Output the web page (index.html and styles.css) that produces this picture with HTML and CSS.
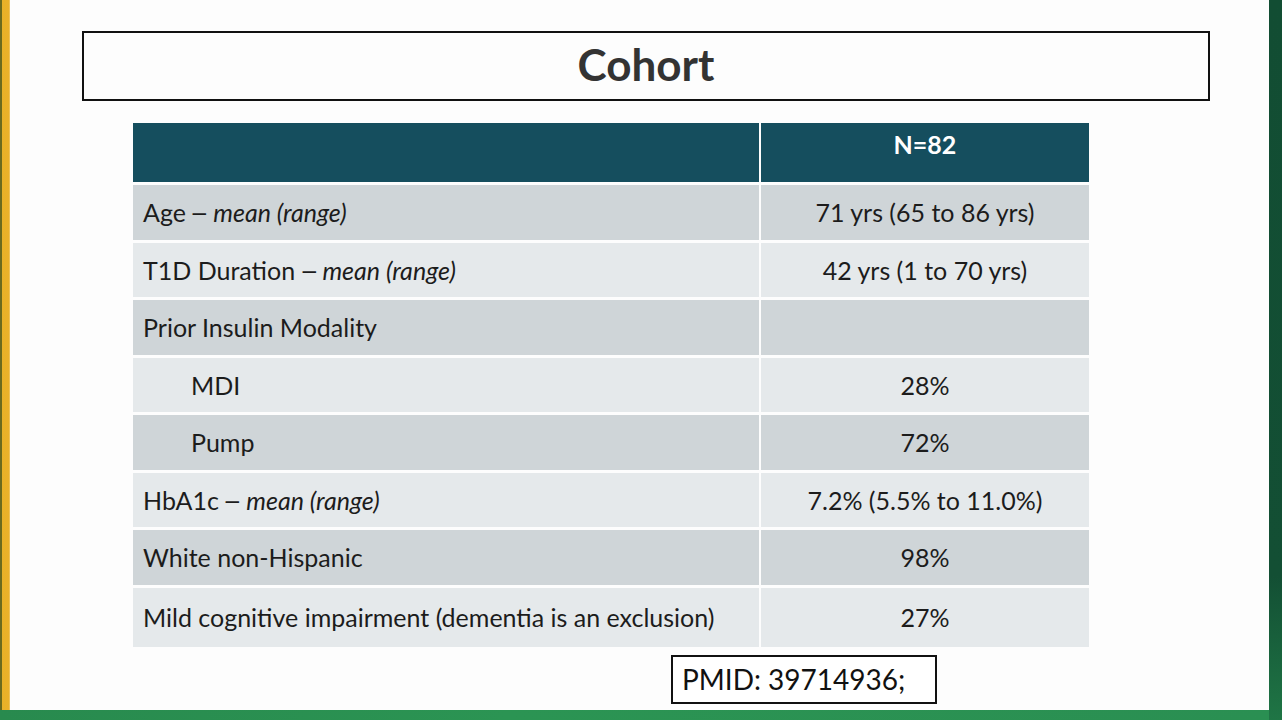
FILE: index.html
```html
<!DOCTYPE html>
<html lang="en">
<head>
<meta charset="utf-8">
<title>Cohort</title>
<link rel="stylesheet" href="styles.css">
</head>
<body>
<div class="frame">
  <div class="stripe-left"></div>
  <main class="slide">
    <h1 class="title-box">Cohort</h1>
    <table class="cohort">
      <colgroup><col class="col-label"><col class="col-value"></colgroup>
      <thead>
        <tr><th class="c1"></th><th class="c2">N=82</th></tr>
      </thead>
      <tbody>
        <tr class="odd"><td class="c1">Age <span class="dash">–</span> <em>mean (range)</em></td><td class="c2">71 yrs (65 to 86 yrs)</td></tr>
        <tr class="even"><td class="c1">T1D Duration <span class="dash">–</span> <em>mean (range)</em></td><td class="c2">42 yrs (1 to 70 yrs)</td></tr>
        <tr class="odd"><td class="c1">Prior Insulin Modality</td><td class="c2"></td></tr>
        <tr class="even"><td class="c1 indent">MDI</td><td class="c2">28%</td></tr>
        <tr class="odd"><td class="c1 indent">Pump</td><td class="c2">72%</td></tr>
        <tr class="even"><td class="c1">HbA1c <span class="dash">–</span> <em>mean (range)</em></td><td class="c2">7.2% (5.5% to 11.0%)</td></tr>
        <tr class="odd"><td class="c1">White non-Hispanic</td><td class="c2">98%</td></tr>
        <tr class="even last"><td class="c1">Mild cognitive impairment (dementia is an exclusion)</td><td class="c2">27%</td></tr>
      </tbody>
    </table>
    <div class="pmid">PMID: 39714936;</div>
  </main>
  <div class="stripe-right"></div>
  <div class="band-bottom"></div>
</div>
</body>
</html>
```

FILE: styles.css
```css
html, body {
  margin: 0;
  padding: 0;
}
body {
  width: 1282px;
  height: 720px;
  overflow: hidden;
  background: #2a8f52;
  font-family: Lato, "Open Sans", "Liberation Sans", sans-serif;
}
.frame {
  display: grid;
  grid-template-columns: 10px 1259px 13px;
  grid-template-rows: 710px 10px;
  width: 1282px;
  height: 720px;
}
.stripe-left {
  grid-column: 1;
  grid-row: 1;
  background: linear-gradient(to right, #6b6a1e 0, #6b6a1e 2px, #e9b127 2px, #eab22a 9px, #f3d48a 10px);
}
.stripe-right {
  grid-column: 3;
  grid-row: 1 / span 2;
  background: linear-gradient(to bottom, #124d33 0%, #134f34 80%, #1f7545 100%);
}
.band-bottom {
  grid-column: 1 / span 2;
  grid-row: 2;
  background: linear-gradient(to right, #288a4e, #2b9453 40%, #2a8f52);
}
.slide {
  grid-column: 2;
  grid-row: 1;
  background: #fdfdfd;
  padding-top: 31px;
  box-sizing: border-box;
}
.title-box {
  margin: 0 0 0 72px;
  width: 1128px;
  height: 70px;
  box-sizing: border-box;
  border: 2px solid #111;
  display: flex;
  align-items: center;
  justify-content: center;
  font-size: 44px;
  font-weight: 700;
  color: #333;
  padding-bottom: 4px;
}
.cohort {
  margin: 22px 0 0 123px;
  width: 956px;
  table-layout: fixed;
  border-collapse: separate;
  border-spacing: 0;
  font-size: 25px;
  color: #1c1c1c;
}
.col-label {
  width: 628px;
}
.col-value {
  width: 328px;
}
.cohort th, .cohort td {
  padding: 0;
  border-bottom: 3px solid #fdfdfd;
  vertical-align: middle;
  white-space: nowrap;
}
.cohort .c1 {
  border-right: 2px solid #fdfdfd;
  text-align: left;
  padding-left: 10px;
}
.cohort .c2 {
  text-align: center;
}
.cohort th {
  background: #154e5e;
  color: #fff;
  font-weight: 700;
  font-size: 25px;
  padding-bottom: 17px;
  height: 42px;
}
.cohort td {
  height: 54.5px;
}
.cohort tr.odd td {
  background: #cfd5d8;
}
.cohort tr.even td {
  background: #e5e9eb;
}
.cohort tr.last td {
  height: 59px;
  border-bottom: 0;
}
.cohort td.indent {
  padding-left: 58px;
}
.cohort .dash {
  display: inline-block;
  transform: scaleX(1.35);
}
.cohort em {
  font-style: italic;
}
.pmid {
  margin: 8px 0 0 661px;
  width: 266px;
  height: 49px;
  box-sizing: border-box;
  border: 2px solid #111;
  background: #fff;
  font-size: 28px;
  color: #111;
  padding-left: 9px;
  display: flex;
  align-items: center;
}
```
